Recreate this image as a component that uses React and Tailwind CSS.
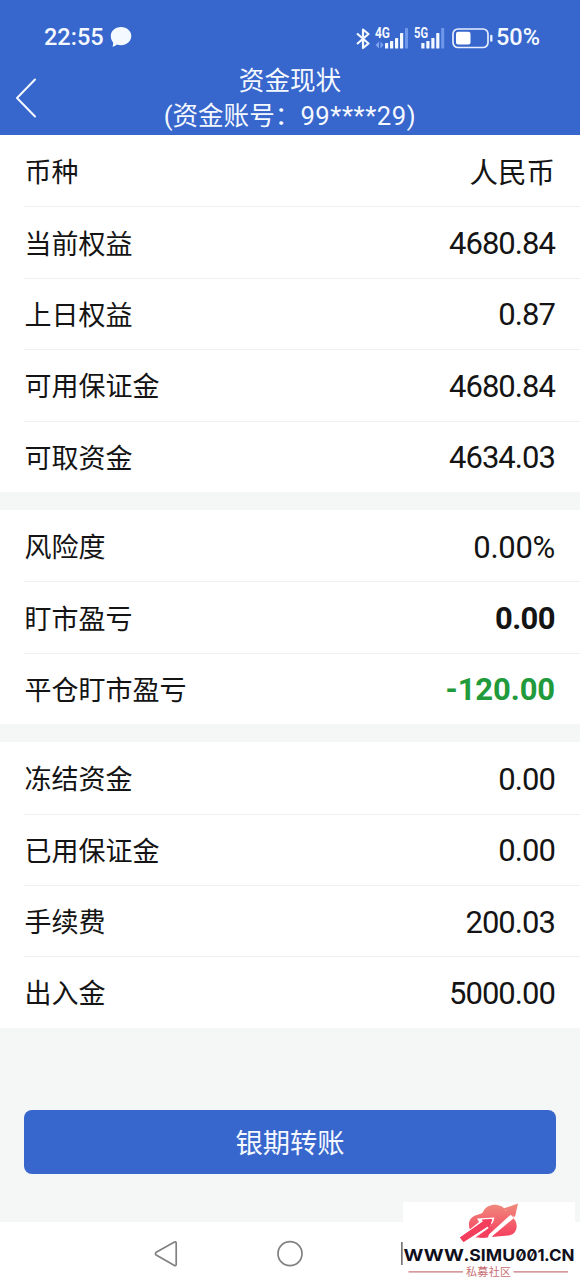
const groups = [
  [
    { label: '币种', value: '人民币', kind: 'cjk' },
    { label: '当前权益', value: '4680.84' },
    { label: '上日权益', value: '0.87' },
    { label: '可用保证金', value: '4680.84' },
    { label: '可取资金', value: '4634.03' },
  ],
  [
    { label: '风险度', value: '0.00%', kind: 'percent' },
    { label: '盯市盈亏', value: '0.00', kind: 'bold' },
    { label: '平仓盯市盈亏', value: '-120.00', kind: 'green' },
  ],
  [
    { label: '冻结资金', value: '0.00' },
    { label: '已用保证金', value: '0.00' },
    { label: '手续费', value: '200.03' },
    { label: '出入金', value: '5000.00' },
  ],
];

const valueStyles = {
  normal: 'pt-[2px] text-[31px] tracking-[-0.95px] font-normal text-[#141414]',
  percent: 'pt-[2px] text-[31px] tracking-[-0.3px] font-normal text-[#141414]',
  cjk: 'pt-[6px] text-[28.5px] font-normal text-[#141414]',
  bold: 'pt-[2px] text-[31px] tracking-[-0.6px] font-bold text-[#141414]',
  green: 'pt-[2px] text-[31px] tracking-[-0.1px] font-bold text-[#219a3b]',
};

function Row({ label, value, kind = 'normal', first }) {
  return (
    <div className={`ml-6 flex h-[71.4px] items-center justify-between border-t pr-[25px] ${first ? 'border-transparent' : 'border-[#efefef]'}`}>
      <span className="pt-[5px] pl-[0.5px] text-[27px] leading-none text-[#141414]">{label}</span>
      <span className={`leading-none ${valueStyles[kind]}`}>{value}</span>
    </div>
  );
}

function StatusIcons() {
  return (
    <svg className="h-[26px] w-[140px]" viewBox="355 22 140 26" fill="none">
      <path d="M357 31.5L368.5 41.5L363 46V27.5L368.5 32L357 42" stroke="#f4f8ff" strokeWidth="2.2" strokeLinejoin="round" />
      <g fill="#f4f8ff" fontFamily="Roboto, sans-serif" fontWeight="700" fontSize="14">
        <text x="375" y="36.3" textLength="15" lengthAdjust="spacingAndGlyphs">4G</text>
        <text x="414" y="36.3" textLength="14" lengthAdjust="spacingAndGlyphs">5G</text>
      </g>
      <path d="M375.5 43L379 39.5V46.5ZM383.5 43L380.5 39.5V46.5Z" fill="#7fa3ee" />
      <g fill="#f4f8ff">
        <rect x="385" y="41" width="3.2" height="5.5" rx=".6" />
        <rect x="390" y="39" width="3.2" height="7.5" rx=".6" />
        <rect x="395" y="36" width="3.2" height="10.5" rx=".6" />
        <rect x="400" y="31" width="3.2" height="15.5" rx=".6" />
        <rect x="421.3" y="41" width="3.2" height="5.5" rx=".6" />
        <rect x="426.3" y="39" width="3.2" height="7.5" rx=".6" />
        <rect x="431.3" y="36" width="3.2" height="10.5" rx=".6" />
        <rect x="436.2" y="31" width="3.2" height="15.5" rx=".6" />
      </g>
      <rect x="405" y="26" width="3" height="20.5" rx=".6" fill="#7098ea" />
      <rect x="441.2" y="26" width="3" height="20.5" rx=".6" fill="#7098ea" />
      <rect x="453" y="27" width="35" height="18.5" rx="5" stroke="#e6eeff" strokeWidth="1.7" />
      <rect x="456" y="29.8" width="14.5" height="12.8" rx="2" fill="#fff" />
      <path d="M491.3 34V38.5" stroke="#e6eeff" strokeWidth="2.4" strokeLinecap="round" />
    </svg>
  );
}

function Watermark() {
  return (
    <svg className="absolute right-0 bottom-0 h-[83px] w-[180px]" viewBox="400 1202 180 83">
      <defs>
        <linearGradient id="cloud" gradientUnits="userSpaceOnUse" x1="0" y1="1204" x2="0" y2="1238">
          <stop offset="0" stopColor="#f08a7c" />
          <stop offset="1" stopColor="#f53d5e" />
        </linearGradient>
      </defs>
      <rect x="403" y="1202" width="172" height="83" fill="#fff" />
      <rect x="401" y="1242" width="1.7" height="23" fill="#777" />
      <path
        d="M473 1233C467 1229 467 1217 477 1215C479.500 1213.800 482 1214 483 1212C487 1202.500 502 1202.500 506 1211C512 1211 514 1216 514 1219C519 1224 517 1235 508 1235.500L486 1237.500H475Z"
        fill="url(#cloud)"
      />
      <path d="M458 1239L479 1222L477 1218.500L494.500 1217.500L490.500 1231L487.500 1228.500L476 1238L466 1243Z" fill="#fff" />
      <path d="M460 1237.500L483 1221.500L482 1219.800L492 1219L489.500 1229L487.500 1226.500L463.500 1242Z" fill="#f33e5e" />
      <path d="M484.500 1238.500L510 1214L514 1218L493 1235.500L491 1238.500Z" fill="#fff" />
      <path d="M475.500 1237.500L506.500 1211L503.500 1208.500L518 1203.500L515 1217L511.500 1214L485.500 1237.500Z" fill="url(#cloud)" />
      <path d="M474 1238.500L490.500 1224L490 1230L478 1238.500L470 1240Z" fill="#fff" />
      <path d="M460 1237.500L483 1221.500L482 1219.800L492 1219L489.500 1229L487.500 1226.500L463.500 1242Z" fill="#f33e5e" />
      <path d="M475.500 1237.500L491.500 1226L488 1237.500Z" fill="#f53f5f" />
      <g fill="#10101c" fontFamily="Inter, sans-serif" fontWeight="700" fontSize="16.2">
        <text x="403.5" y="1260.8" textLength="60.5" lengthAdjust="spacingAndGlyphs">WWW</text>
        <text x="463.5" y="1260.8" textLength="51.5" lengthAdjust="spacingAndGlyphs">.SIMU</text>
        <text x="515.5" y="1260.8" textLength="29" lengthAdjust="spacingAndGlyphs" style={{ fontFeatureSettings: '"zero"' }}>001</text>
        <text x="544" y="1260.8" textLength="30.5" lengthAdjust="spacingAndGlyphs">.CN</text>
      </g>
      <path d="M408.5 1271.8H463M513.5 1271.8H568" stroke="#c9797c" strokeWidth="1.3" />
      <text x="466" y="1276" fill="#c76f73" fontFamily="'Noto Sans CJK SC', sans-serif" fontSize="11" textLength="45">私募社区</text>
    </svg>
  );
}

export default function App() {
  return (
    <div className="relative flex h-[1285px] w-[580px] flex-col overflow-hidden bg-[#f5f7f7] font-[Roboto,'Noto_Sans_CJK_SC',sans-serif]">
      <header className="h-[134.5px] shrink-0 bg-[#3766cc] text-[#f4f8ff]">
        <div className="flex h-[60px] items-end pr-10 pl-[44px]">
          <div className="flex h-[46px] w-full items-center">
            <span className="w-[60px] pt-[1px] text-[23.5px] leading-none font-medium whitespace-nowrap">22:55</span>
            <svg className="ml-[6px] h-[22px] w-[22px]" viewBox="0 0 22 22" fill="#f4f8ff">
              <path d="M11 1C17 1 21.300 5 21.300 10S17 19.200 11 19.200C9.500 19.200 8 19 6.800 18.500C5.600 20 4 20.600 2.300 20.600C3 19.500 3.300 18 3 16.300C1.700 14.600 .8 12.400 .8 10C.8 5 5 1 11 1Z" />
            </svg>
            <div className="ml-auto flex items-center">
              <StatusIcons />
              <span className="ml-[1px] pt-[1px] text-[23.5px] leading-none font-medium">50%</span>
            </div>
          </div>
        </div>
        <div className="grid h-[74px] grid-cols-[60px_1fr_60px] items-center">
          <svg className="ml-[14px] h-[42px] w-6" viewBox="0 0 24 42" fill="none" stroke="#f4f8ff" strokeWidth="2">
            <path d="M21 3.500L3 22L21 40.500" strokeLinecap="round" strokeLinejoin="round" />
          </svg>
          <div className="flex flex-col pt-[4px] text-center text-[25.6px] leading-[35px]">
            <h1>资金现状</h1>
            <p className="whitespace-nowrap">
              (资金账号：<span className="tracking-[0.6px]">99****29)</span>
            </p>
          </div>
        </div>
      </header>
      <main className="flex flex-col gap-[18px] pt-[0.5px]">
        {groups.map((rows, i) => (
          <section key={i} className="bg-white">
            {rows.map((row, j) => (
              <Row key={row.label} {...row} first={j === 0} />
            ))}
          </section>
        ))}
      </main>
      <button className="mx-6 mt-[82.2px] h-[64.5px] shrink-0 rounded-lg bg-[#3766cc] pt-[4px] text-[27.3px] text-[#f4f8ff]">银期转账</button>
      <nav className="mt-auto flex h-[63px] shrink-0 items-center bg-white pl-[152px]">
        <svg className="h-[30px] w-[160px]" viewBox="152 1239 160 30" fill="none" stroke="#808080" strokeWidth="1.7">
          <path d="M156.200 1252.300L174.500 1242C175.400 1241.500 176.200 1242 176.200 1243V1264.500C176.200 1265.500 175.400 1266 174.500 1265.500L156.200 1255C155.200 1254.300 155.200 1253 156.200 1252.300Z" />
          <circle cx="290" cy="1253.700" r="12" />
        </svg>
      </nav>
      <Watermark />
    </div>
  );
}
